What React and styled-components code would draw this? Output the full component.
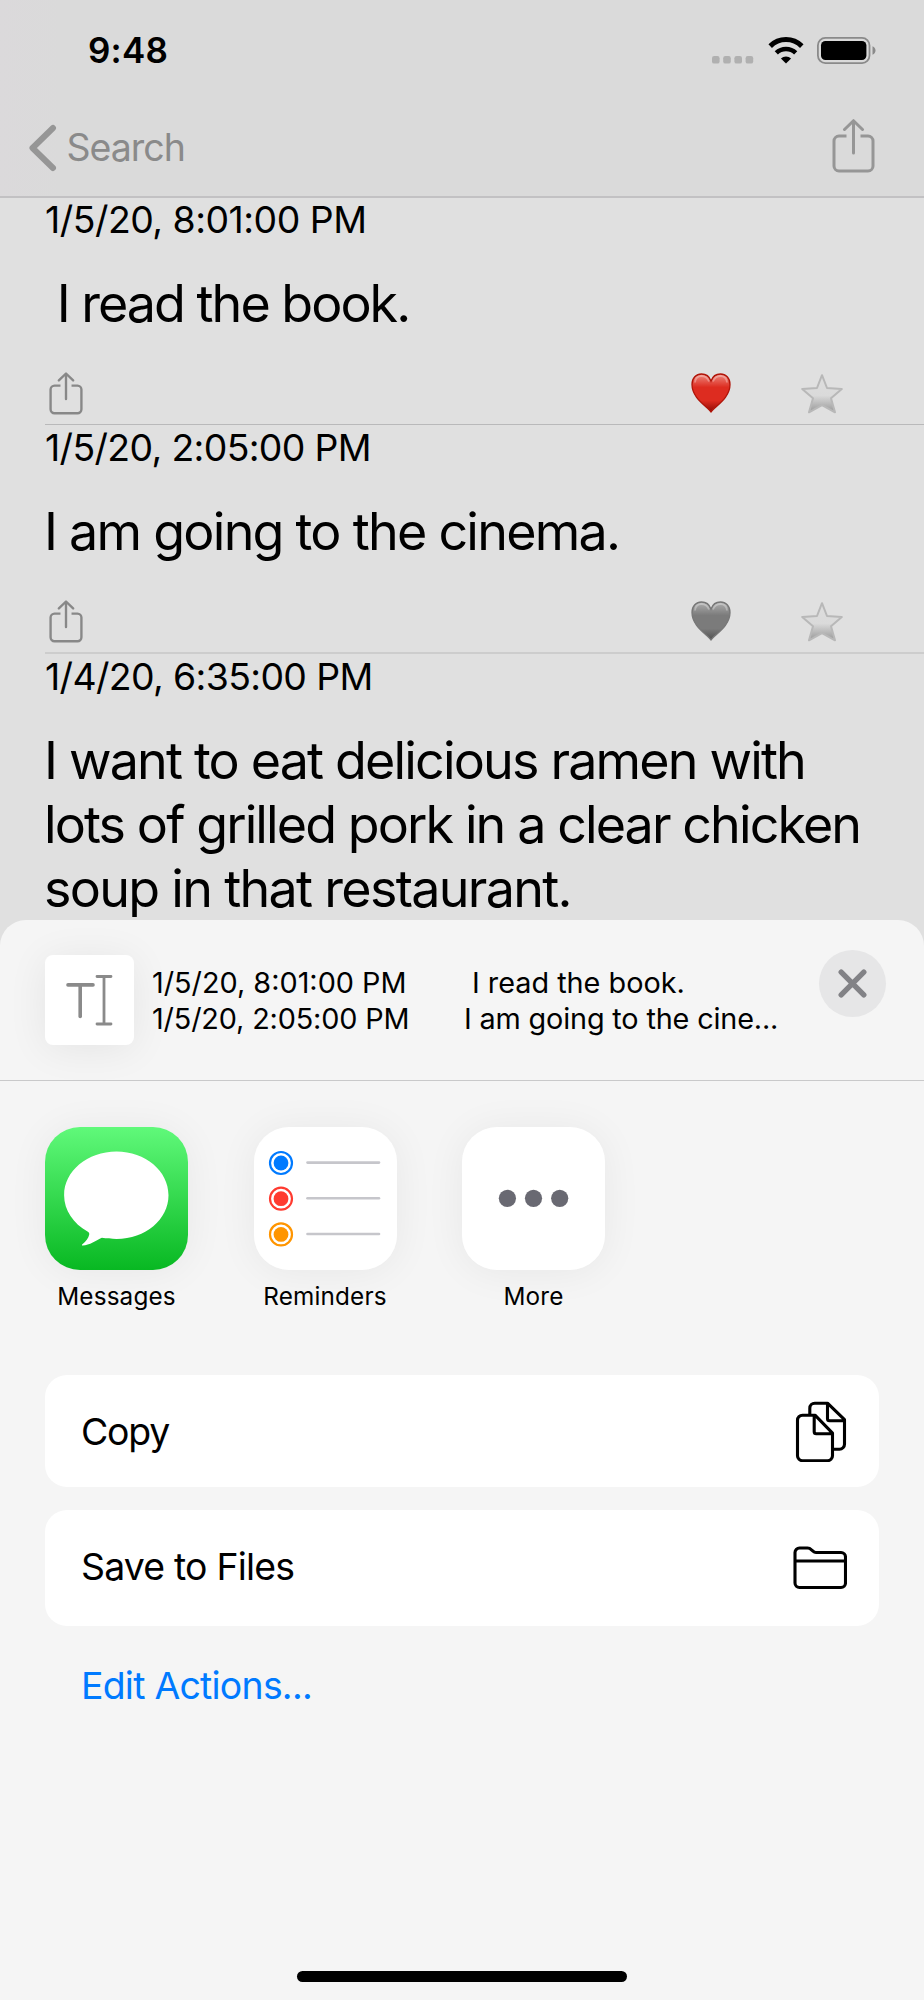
import React from "react";
import styled, { createGlobalStyle } from "styled-components";

const GlobalStyle = createGlobalStyle`
  * {
    box-sizing: border-box;
  }

  body {
    margin: 0;
    background: #e0e0e0;
    font-family: Inter, "Liberation Sans", sans-serif;
    color: #000;
  }
`;

const Screen = styled.div`
  width: 924px;
  height: 2000px;
  display: flex;
  flex-direction: column;
  overflow: hidden;
  background: #e0e0e0;
`;

const Top = styled.header`
  height: 198px;
  flex: none;
  background: linear-gradient(90deg, #dbd9db 0, #dadada 60px);
  border-bottom: 2px solid #c2c1c3;
`;

const StatusBar = styled.div`
  height: 100px;
  padding: 0 48px 0 88px;
  display: flex;
  align-items: center;
  justify-content: space-between;
`;

const Clock = styled.span`
  font-size: 35px;
  font-weight: 600;
  line-height: 44px;
  letter-spacing: 0.2px;
`;

const StatusIcons = styled.div`
  display: flex;
  align-items: flex-end;
  gap: 13.5px;
`;

const NavBar = styled.nav`
  height: 96px;
  padding: 0 49px 0 29px;
  display: flex;
  align-items: center;
  justify-content: space-between;
`;

const Back = styled.a`
  display: flex;
  align-items: center;
  gap: 9.5px;
  color: #8a8a8a;
  font-size: 37.5px;
  line-height: 44px;
  letter-spacing: -1px;
`;

const ShareButton = styled.a`
  display: flex;
  padding-bottom: 4px;
`;

const List = styled.main`
  height: 722px;
  flex: none;
  overflow: hidden;
`;

const Row = styled.article`
  height: ${(props) => props.height};
  margin-left: 45px;
  padding-top: ${(props) => props.top || "0"};
  border-bottom: ${(props) => props.line};
`;

const DateText = styled.div`
  font-size: 37.4px;
  line-height: 44px;
  white-space: pre;
  letter-spacing: ${(props) => props.spacing || "0"};
`;

const Sentence = styled.p`
  margin: 30px 0 0 -1px;
  font-size: 52px;
  line-height: 64px;
  white-space: pre;
`;

const Line = styled.span`
  display: block;
  letter-spacing: ${(props) => props.spacing || "0"};
`;

const RowActions = styled.div`
  display: flex;
  align-items: center;
  margin-top: 36px;
  padding: 0 80px 0 4px;
`;

const Marks = styled.div`
  display: flex;
  gap: 69px;
  margin-left: auto;
`;

const Sheet = styled.section`
  flex: 1;
  display: flex;
  flex-direction: column;
  border-radius: 26px 26px 0 0;
  background: #f5f5f5;
`;

const SheetHeader = styled.div`
  height: 161px;
  padding: 30px 38px 0 45px;
  display: flex;
  align-items: flex-start;
  border-bottom: 1px solid #c9c9ca;
`;

const Thumb = styled.div`
  width: 89px;
  height: 90px;
  margin-top: 5px;
  border-radius: 8px;
  background: #fff;
  box-shadow: 0 4px 40px rgba(0, 0, 0, 0.07);
`;

const Preview = styled.div`
  margin: 15px 0 0 18px;
  font-size: 28.8px;
  line-height: 36px;
  white-space: pre;
`;

const PreviewLine = styled.div`
  display: grid;
  grid-template-columns: ${(props) => props.start} auto;
  letter-spacing: ${(props) => props.spacing || "0"};
`;

const Close = styled.button`
  width: 67px;
  height: 67px;
  margin-left: auto;
  padding: 0;
  border: none;
  border-radius: 50%;
  background: #e6e6e7;
`;

const Apps = styled.div`
  display: flex;
  gap: 65.5px;
  padding: 46px 45px 0;
`;

const AppItem = styled.div`
  width: 143px;
  display: flex;
  flex-direction: column;
  align-items: center;
`;

const AppIcon = styled.div`
  width: 143px;
  height: 143px;
  border-radius: 35px;
  overflow: hidden;
  background: ${(props) => props.fill || "#fff"};
`;

const IconShadow = styled.div`
  border-radius: 35px;
  box-shadow: 0 2px 40px rgba(0, 0, 0, 0.06);
`;

const AppName = styled.span`
  margin-top: 11px;
  font-size: 24.3px;
  line-height: 30px;
  letter-spacing: 0.15px;
`;

const Actions = styled.div`
  display: flex;
  flex-direction: column;
  padding: 64px 45px 0;
`;

const Action = styled.div`
  height: ${(props) => props.height};
  margin-bottom: 23px;
  padding: 0 32px 0 36px;
  display: flex;
  align-items: center;
  justify-content: space-between;
  border-radius: 22px;
  background: #fff;
  font-size: 37.4px;
  line-height: 44px;
`;

const ActionLabel = styled.span`
  padding: ${(props) => props.nudge};
  letter-spacing: ${(props) => props.spacing};
`;

const EditActions = styled.a`
  margin: 14.5px 0 0 36px;
  color: #007aff;
  font-size: 37.4px;
  line-height: 44px;
  letter-spacing: -0.75px;
`;

const HomeIndicator = styled.div`
  width: 330px;
  height: 11px;
  margin: auto auto 18px;
  border-radius: 6px;
  background: #000;
`;

const ShareIcon = ({ width, height, color }) => (
  <svg width={width} height={height} viewBox="0 0 43 54" fill="none" stroke={color} strokeWidth="3" strokeLinecap="round" strokeLinejoin="round">
    <path d="M14.5 17H7a5 5 0 0 0-5 5v25a5 5 0 0 0 5 5h29a5 5 0 0 0 5-5V22a5 5 0 0 0-5-5h-7.5" strokeLinecap="butt" />
    <path d="M21.5 34V2M12.5 10.5 21.5 1.7l9 8.8" />
  </svg>
);

const BackArrow = () => (
  <svg width="28" height="48" viewBox="0 0 28 48" fill="none" stroke="#969696" strokeWidth="6" strokeLinecap="round" strokeLinejoin="round">
    <path d="M24 4 3.5 24 24 44" />
  </svg>
);

const SignalDots = () => (
  <svg width="42" height="8" viewBox="0 0 42 8" fill="#b0b0b0">
    {[0, 11.2, 22.4, 33.6].map((x) => (
      <rect key={x} x={x} width="7.6" height="7.6" rx="2.2" />
    ))}
  </svg>
);

const Wifi = () => (
  <svg width="36" height="27" viewBox="0 0 36 27" fill="none" stroke="#000" strokeWidth="5">
    <path d="M2.2 9.1a22.5 22.5 0 0 1 31.6 0" />
    <path d="M8.3 15.9a14 14 0 0 1 19.4 0" strokeWidth="4.6" />
    <path d="M12.9 21.4a7.6 7.6 0 0 1 10.2 0L18 26.4z" fill="#000" stroke="none" />
  </svg>
);

const Battery = () => (
  <svg width="59" height="27" viewBox="0 0 59 27">
    <rect x="0.9" y="0.9" width="51.6" height="25.2" rx="7.5" fill="none" stroke="#8a8a8a" strokeWidth="1.8" />
    <rect x="4" y="4" width="45.4" height="19" rx="4.5" />
    <path d="M55.5 9.2c4 1.6 4 7 0 8.6z" fill="#8a8a8a" />
  </svg>
);

const Heart = ({ id, edge, top, middle, bottom }) => (
  <svg width="40" height="40" viewBox="0 0 40 40">
    <defs>
      <linearGradient id={id} x1="0" y1="0" x2="0" y2="1">
        <stop offset="0" stopColor={top} />
        <stop offset="0.35" stopColor={middle} />
        <stop offset="0.7" stopColor={middle} />
        <stop offset="1" stopColor={bottom} />
      </linearGradient>
    </defs>
    <path
      d="M20 39C16.5 33.5 1 25.5 1 11.5 1 5 5.2 1 10.5 1 15 1 18.5 3.8 20 8 21.5 3.8 25 1 29.5 1 34.8 1 39 5 39 11.5 39 25.5 23.5 33.5 20 39z"
      fill={`url(#${id})`}
      stroke={edge}
      strokeWidth="1.3"
    />
    <path d="M4 9.5C4.3 5 7 3 10.5 3s6.3 2 7.5 5.5M22 8.5C23.2 5 26 3 29.5 3s6.2 2 6.5 6.5" fill="none" stroke="#fff" strokeOpacity="0.3" strokeWidth="1.8" />
  </svg>
);

const Star = ({ id }) => (
  <svg width="44" height="42" viewBox="0 0 44 42">
    <defs>
      <linearGradient id={id} x1="0" y1="0" x2="0" y2="1">
        <stop offset="0" stopColor="#dedede" />
        <stop offset="0.55" stopColor="#dadada" />
        <stop offset="1" stopColor="#989898" />
      </linearGradient>
    </defs>
    <path
      d="M22 2.2 27 15 41.8 15.9 31 25.2 35 39.3 22 32.2 9 39.3 13 25.2 2.2 15.9 17 15z"
      fill={`url(#${id})`}
      stroke="#b8b8b8"
      strokeWidth="2"
      strokeLinejoin="round"
    />
  </svg>
);

const TextCursorIcon = () => (
  <svg width="89" height="90" viewBox="0 0 89 90" fill="none" stroke="#8a8a8a" strokeLinecap="round">
    <path d="M23 29.9h25M35.2 30v31.5" strokeWidth="3.6" />
    <path d="M52 21.5h14M52 69h14M59 21.5V69" strokeWidth="2.8" />
  </svg>
);

const Cross = () => (
  <svg width="67" height="67" viewBox="0 0 67 67" stroke="#828286" strokeWidth="5.4" strokeLinecap="round">
    <path d="M22.2 22.2 44.8 44.8M44.8 22.2 22.2 44.8" />
  </svg>
);

const Bubble = () => (
  <svg width="143" height="143" viewBox="0 0 143 143" fill="#fff">
    <path d="M71.5 24.5c29 0 52 19.5 52 43.7s-23 43.7-52 43.7c-5 0-10-.4-14.6-1.2-5.5 2.8-12.5 7.3-19.2 7.9-1.2 0-.9-1 0-1.600 3-2.300 5.800-6 6.500-9.300.3-1.700-.5-2.500-1.700-3.200C28.500 96.500 19.100 83.400 19.100 68.200c0-24.200 23.400-43.700 52.400-43.700z" />
  </svg>
);

const reminderColors = ["#007aff", "#ff3b30", "#ff9500"];

const ReminderRows = () => (
  <svg width="143" height="143" viewBox="0 0 143 143">
    {reminderColors.map((color, i) => (
      <g key={color} transform={`translate(0 ${36 + i * 35.7})`}>
        <circle cx="27" cy="0" r="11" fill="none" stroke={color} strokeWidth="2.2" />
        <circle cx="27" cy="0" r="7.4" fill={color} />
        <path d="M53.5 -.4h71.5" stroke="#c6c6cb" strokeWidth="2.6" strokeLinecap="round" />
      </g>
    ))}
  </svg>
);

const Dots = () => (
  <svg width="143" height="143" viewBox="0 0 143 143" fill="#696972">
    <circle cx="45.4" cy="71.3" r="8.6" />
    <circle cx="71.5" cy="71.3" r="8.6" />
    <circle cx="97.7" cy="71.3" r="8.6" />
  </svg>
);

const CopyIcon = () => (
  <svg width="52" height="62" viewBox="0 -1.2 52 62" fill="none" stroke="#000" strokeWidth="3.1" strokeLinejoin="round">
    <path d="M14.8 13V7a5 5 0 0 1 5-5H32.5L49.5 18.5V43a5 5 0 0 1-5 5H38.5M32.5 2V17.5a2 2 0 0 0 2 2H49" />
    <path d="M20 14H7.5a5 5 0 0 0-5 5V54.5a5 5 0 0 0 5 5H32.5a5 5 0 0 0 5-5V32L20 14zM19.2 14V30.5a2 2 0 0 0 2 2H37" />
  </svg>
);

const FolderIcon = () => (
  <svg width="54" height="44" viewBox="0 0 54 44" fill="none" stroke="#000" strokeWidth="3.1" strokeLinejoin="round">
    <path d="M2 37V6.5a4.500 4.500 0 0 1 4.500-4.500H14.500c2 0 3 .8 4 1.800l1.500 1.400c.8.8 1.800 1.300 3 1.300H48a4.500 4.500 0 0 1 4.500 4.500V37a4.500 4.500 0 0 1-4.500 4.500H6.500A4.500 4.500 0 0 1 2 37zM2 15H52.500" />
  </svg>
);

const App = () => {
  return (
    <Screen>
      <GlobalStyle />
      <Top>
        <StatusBar>
          <Clock>9:48</Clock>
          <StatusIcons>
            <SignalDots />
            <Wifi />
            <Battery />
          </StatusIcons>
        </StatusBar>
        <NavBar>
          <Back>
            <BackArrow />
            Search
          </Back>
          <ShareButton>
            <ShareIcon width={43} height={54} color="#969696" />
          </ShareButton>
        </NavBar>
      </Top>

      <List>
        <Row height="227px" line="1px solid #b9b9ba">
          <DateText spacing="-0.5px">1/5/20, 8:01:00 PM</DateText>
          <Sentence>
            <Line spacing="-1.98px"> I read the book.</Line>
          </Sentence>
          <RowActions>
            <ShareIcon width={34} height={43} color="#888" />
            <Marks>
              <Heart id="heart-red" edge="#b01408" top="#ee8a80" middle="#dd2c20" bottom="#8e0a04" />
              <Star id="star-1" />
            </Marks>
          </RowActions>
        </Row>
        <Row height="229px" top="1px" line="2px solid #cdcdcd">
          <DateText spacing="-0.65px">1/5/20, 2:05:00 PM</DateText>
          <Sentence>
            <Line spacing="-1.75px">I am going to the cinema.</Line>
          </Sentence>
          <RowActions>
            <ShareIcon width={34} height={43} color="#888" />
            <Marks>
              <Heart id="heart-gray" edge="#777" top="#b0b0b0" middle="#7b7b7b" bottom="#505050" />
              <Star id="star-2" />
            </Marks>
          </RowActions>
        </Row>
        <Row height="400px" top="1px">
          <DateText spacing="-0.63px">1/4/20, 6:35:00 PM</DateText>
          <Sentence>
            <Line spacing="-1.83px">I want to eat delicious ramen with</Line>
            <Line spacing="-1.9px">lots of grilled pork in a clear chicken</Line>
            <Line spacing="-1.7px">soup in that restaurant.</Line>
          </Sentence>
        </Row>
      </List>

      <Sheet>
        <SheetHeader>
          <Thumb>
            <TextCursorIcon />
          </Thumb>
          <Preview>
            <PreviewLine start="320px" spacing="0">
              <span>1/5/20, 8:01:00 PM</span>
              <span>I read the book.</span>
            </PreviewLine>
            <PreviewLine start="312px" spacing="-0.15px">
              <span>1/5/20, 2:05:00 PM</span>
              <span>I am going to the cine...</span>
            </PreviewLine>
          </Preview>
          <Close>
            <Cross />
          </Close>
        </SheetHeader>

        <Apps>
          <AppItem>
            <IconShadow>
              <AppIcon fill="linear-gradient(#60f97a, #08b822)">
                <Bubble />
              </AppIcon>
            </IconShadow>
            <AppName>Messages</AppName>
          </AppItem>
          <AppItem>
            <IconShadow>
              <AppIcon>
                <ReminderRows />
              </AppIcon>
            </IconShadow>
            <AppName>Reminders</AppName>
          </AppItem>
          <AppItem>
            <IconShadow>
              <AppIcon>
                <Dots />
              </AppIcon>
            </IconShadow>
            <AppName>More</AppName>
          </AppItem>
        </Apps>

        <Actions>
          <Action height="112px">
            <ActionLabel spacing="-1.2px" nudge="1px 0 0">Copy</ActionLabel>
            <CopyIcon />
          </Action>
          <Action height="116px">
            <ActionLabel spacing="-0.8px" nudge="0 0 2px">Save to Files</ActionLabel>
            <FolderIcon />
          </Action>
          <EditActions>Edit Actions...</EditActions>
        </Actions>
        <HomeIndicator />
      </Sheet>
    </Screen>
  );
};

export default App;
